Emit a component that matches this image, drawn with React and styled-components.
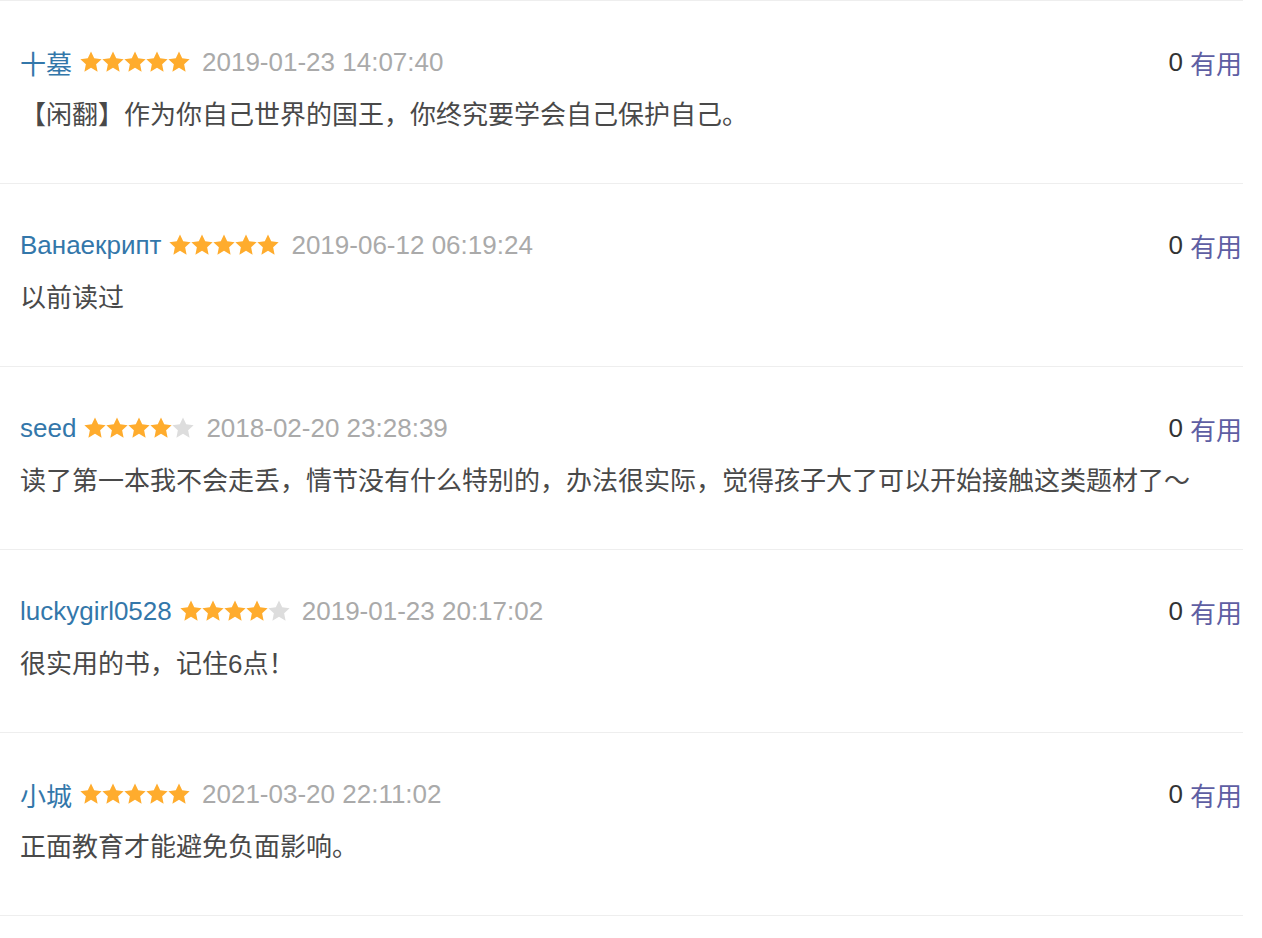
import styled, { createGlobalStyle } from "styled-components";

const GlobalStyle = createGlobalStyle`
  html, body {
    margin: 0;
    padding: 0;
    background: #fff;
  }
  body {
    font-family: "Liberation Sans", Arial, "Noto Sans CJK SC", sans-serif;
    color: #494949;
  }
`;

const reviews = [
  { name: "十墓", rating: 5, time: "2019-01-23 14:07:40", votes: 0, text: "【闲翻】作为你自己世界的国王，你终究要学会自己保护自己。" },
  { name: "Ванаекрипт", rating: 5, time: "2019-06-12 06:19:24", votes: 0, text: "以前读过" },
  { name: "seed", rating: 4, time: "2018-02-20 23:28:39", votes: 0, text: "读了第一本我不会走丢，情节没有什么特别的，办法很实际，觉得孩子大了可以开始接触这类题材了～" },
  { name: "luckygirl0528", rating: 4, time: "2019-01-23 20:17:02", votes: 0, text: "很实用的书，记住6点！" },
  { name: "小城", rating: 5, time: "2021-03-20 22:11:02", votes: 0, text: "正面教育才能避免负面影响。" },
];

const Star = ({ on }) => (
  <svg width="22" height="22" viewBox="0 0 24 24">
    <path
      d="M12 0.6l3.5 7.4 8.1.9-6 5.6 1.6 8-7.2-4.1-7.2 4.1 1.6-8-6-5.6 8.1-.9z"
      fill={on ? "#ffac2d" : "#dddddd"}
    />
  </svg>
);

export default function App() {
  return (
    <>
      <GlobalStyle />
      <List>
        {reviews.map((r, i) => (
          <Item key={i}>
            <Header>
              <Meta>
                <Name>{r.name}</Name>
                <Stars>
                  {[1, 2, 3, 4, 5].map((n) => (
                    <Star key={n} on={n <= r.rating} />
                  ))}
                </Stars>
                <Time>{r.time}</Time>
              </Meta>
              <Votes>
                <Count>{r.votes}</Count>
                <Useful>有用</Useful>
              </Votes>
            </Header>
            <Body>{r.text}</Body>
          </Item>
        ))}
      </List>
    </>
  );
}

const List = styled.div`
  width: 1243px;
  border-top: 1px solid #eeeeee;
`;

const Item = styled.div`
  padding: 38px 1px 45px 20px;
  border-bottom: 1px solid #eeeeee;
`;

const Header = styled.div`
  display: flex;
  align-items: center;
  justify-content: space-between;
  height: 46px;
  margin-bottom: 7px;
  font-size: 26px;
`;

const Meta = styled.div`
  display: flex;
  align-items: center;
`;

const Name = styled.a`
  color: #3377aa;
  text-decoration: none;
`;

const Stars = styled.span`
  display: inline-flex;
  margin: 0 12px 0 8px;
  position: relative;
  top: 0px;
`;

const Time = styled.span`
  color: #aaaaaa;
  font-size: 26px;
`;

const Votes = styled.div`
  display: flex;
  align-items: center;
  gap: 7px;
`;

const Count = styled.span`
  color: #333333;
`;

const Useful = styled.a`
  color: #5e5ea3;
  text-decoration: none;
`;

const Body = styled.p`
  margin: 0;
  font-size: 26px;
  line-height: 46px;
  color: #494949;
`;
